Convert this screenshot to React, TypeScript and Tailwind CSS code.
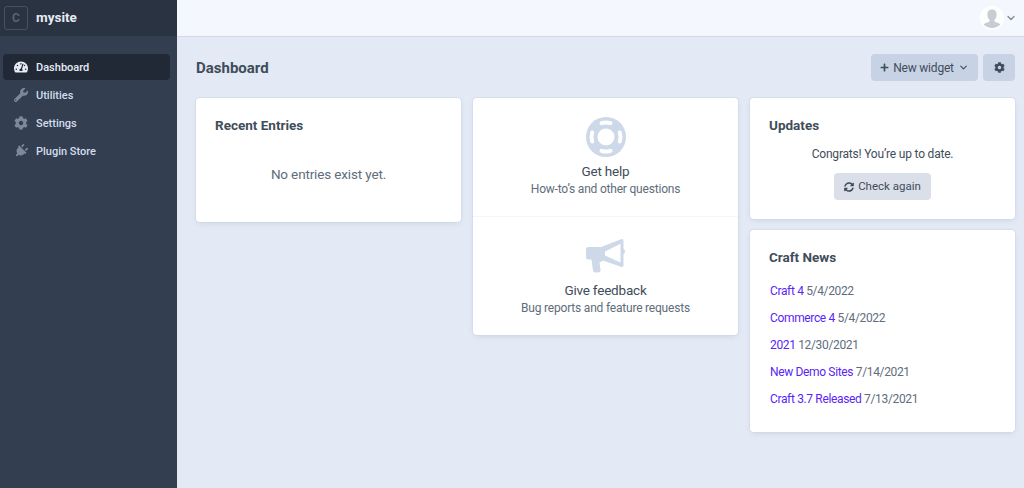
import React from 'react';
import { FaTachometerAlt, FaWrench, FaCog, FaPlug, FaPlus, FaSyncAlt } from 'react-icons/fa';
import { ChevronDown } from 'lucide-react';

const navItems = [
    { label: 'Dashboard', icon: FaTachometerAlt, active: true, iconClass: '' },
    { label: 'Utilities', icon: FaWrench, active: false, iconClass: '' },
    { label: 'Settings', icon: FaCog, active: false, iconClass: '' },
    { label: 'Plugin Store', icon: FaPlug, active: false, iconClass: 'rotate-45' },
];

const news = [
    { title: 'Craft 4', date: '5/4/2022' },
    { title: 'Commerce 4', date: '5/4/2022' },
    { title: '2021', date: '12/30/2021' },
    { title: 'New Demo Sites', date: '7/14/2021' },
    { title: 'Craft 3.7 Released', date: '7/13/2021' },
];

const cardClass = 'bg-white rounded-[4px] shadow-[0_0_0_1px_rgba(205,216,228,0.5),0_2px_6px_-2px_rgba(100,120,150,0.25)]';

// the package ring has its bands on the diagonals, this one is on the axes
const LifeRing = () => (
    <svg width="40" height="40" viewBox="0 0 40 40" className="text-[#cdd8e9]">
        <circle cx="20" cy="20" r="20" fill="currentColor" />
        <circle cx="20" cy="20" r="8.5" fill="#fff" />
        <g fill="none" stroke="#fff" strokeWidth="4" strokeLinecap="round">
            <path d="M15.5 6.2A14.5 14.5 0 0 1 24.5 6.2" />
            <path d="M33.8 15.5A14.5 14.5 0 0 1 33.8 24.5" />
            <path d="M24.5 33.8A14.5 14.5 0 0 1 15.5 33.8" />
            <path d="M6.2 24.5A14.5 14.5 0 0 1 6.2 15.5" />
        </g>
    </svg>
);

const Megaphone = () => (
    <svg width="42" height="36" viewBox="0 0 42 36" className="text-[#cdd8e9]">
        <path
            fill="currentColor"
            fillRule="evenodd"
            d="M3 9H16L36 1.2Q38.5 .4 38.5 3V10.5Q41.5 13.5 38.5 16.5V27Q38.5 29.6 36 28.8L18 22.5L14.5 24.5L15.5 32Q15.8 34.5 13 34.5H10.5Q8.5 34.5 8 32.5L6.5 21.5H3Q1 21.5 1 19V11.5Q1 9 3 9ZM20 13.5V17.5L35.5 24.5V5.8Z"
        />
    </svg>
);

const Avatar = () => (
    <svg width="24" height="24" viewBox="0 0 24 24">
        <circle cx="12" cy="12" r="12" fill="#fff" />
        <path
            fill="#c9ccd2"
            d="M12 3.5C8.6 3.5 7.2 6 7.4 9C7.6 11.5 8.6 13.2 9.6 14V15.6C7.5 16.6 5 17.2 3.6 18.6A12 12 0 0 0 20.4 18.6C19 17.2 16.5 16.6 14.4 15.6V14C15.4 13.2 16.4 11.5 16.6 9C16.8 6 15.4 3.5 12 3.5Z"
        />
    </svg>
);

const App: React.FC = () => {
    return (
        <div className="flex h-[488px] w-[1024px] overflow-hidden bg-[#e3e9f5] font-['Roboto',sans-serif] text-[12px] text-[#3f4d5a]">
            {/* Sidebar */}
            <aside className="w-[177px] shrink-0 bg-[#333f50] text-[#d2dcee]">
                <div className="flex h-[36px] items-center gap-[8px] bg-[#2a3341] pl-[4px]">
                    <div className="flex h-[24px] w-[24px] items-center justify-center rounded-[3px] border border-[#465162] text-[12px] font-semibold text-[#5b6677]">
                        C
                    </div>
                    <span className="-mt-[2px] text-[13.5px] font-bold text-[#e6ebf5]">mysite</span>
                </div>
                <nav className="mt-[18px] flex flex-col gap-[2px] pl-[3px] pr-[7px]">
                    {navItems.map((item) => {
                        const Icon = item.icon;
                        return (
                            <div
                                key={item.label}
                                className={`flex h-[26px] items-center gap-[8px] rounded-[4px] pl-[11px] text-[11px] font-medium ${item.active ? 'bg-[#212937] text-[#e6ebf5]' : ''}`}
                            >
                                <Icon size={14} className={`${item.iconClass} ${item.active ? 'text-[#e6ebf5]' : 'text-[#7d8899]'}`} />
                                <span className="mt-[2px]">{item.label}</span>
                            </div>
                        );
                    })}
                </nav>
            </aside>

            <div className="flex-1">
                {/* Top bar */}
                <header className="flex h-[37px] items-center justify-end border-b border-[#cfd8e8] bg-[#f4f7fd] pr-[7px]">
                    <Avatar />
                    <ChevronDown size={12} strokeWidth={2.5} className="ml-[1px] text-[#7d8899]" />
                </header>

                {/* Page title */}
                <div className="flex h-[61px] items-center justify-between pl-[19px] pr-[9px]">
                    <h1 className="mt-[2px] text-[15px] font-bold text-[#3f4d5a]">Dashboard</h1>
                    <div className="flex gap-[5px]">
                        <button className="flex h-[27px] w-[107px] items-center justify-center gap-[4px] rounded-[4px] bg-[#c8d2e5] text-[12px] tracking-[-0.2px] text-[#3f4d5a]">
                            <FaPlus size={9} />
                            <span>New widget</span>
                            <ChevronDown size={11} strokeWidth={2.5} />
                        </button>
                        <button className="flex h-[27px] w-[32px] items-center justify-center rounded-[4px] bg-[#c8d2e5] text-[#3f4d5a]">
                            <FaCog size={11} />
                        </button>
                    </div>
                </div>

                {/* Widgets */}
                <div className="flex items-start gap-[12px] pl-[19px] pr-[9px]">
                    <section className={`${cardClass} h-[124px] w-[265px] px-[19px] pt-[17px]`}>
                        <h2 className="text-[13.5px] font-bold">Recent Entries</h2>
                        <p className="mt-[29px] text-center text-[13.5px] tracking-[-0.15px] text-[#606d7b]">No entries exist yet.</p>
                    </section>

                    <section className={`${cardClass} h-[237px] w-[265px]`}>
                        <div className="flex h-[119px] flex-col items-center border-b border-[#f3f6fb] pt-[19px]">
                            <LifeRing />
                            <div className="mt-[4px] text-[13.5px] tracking-[-0.2px]">Get help</div>
                            <div className="-mt-[1px] text-[12px] tracking-[-0.2px] text-[#606d7b]">How-to’s and other questions</div>
                        </div>
                        <div className="flex flex-col items-center pt-[21px]">
                            <Megaphone />
                            <div className="mt-[6px] text-[13.5px] tracking-[-0.2px]">Give feedback</div>
                            <div className="-mt-[1px] text-[12px] tracking-[-0.2px] text-[#606d7b]">Bug reports and feature requests</div>
                        </div>
                    </section>

                    <div className="flex w-[265px] flex-col gap-[11px]">
                        <section className={`${cardClass} h-[121px] px-[19px] pt-[17px]`}>
                            <h2 className="text-[13.5px] font-bold">Updates</h2>
                            <p className="mt-[10px] text-center text-[12px] tracking-[-0.2px]">Congrats! You’re up to date.</p>
                            <div className="mt-[10px] flex justify-center">
                                <button className="flex h-[27px] w-[97px] items-center justify-center gap-[4px] rounded-[4px] bg-[#dadfea] text-[11.5px]">
                                    <FaSyncAlt size={10} />
                                    <span>Check again</span>
                                </button>
                            </div>
                        </section>
                        <section className={`${cardClass} h-[202px] px-[19px] pt-[17px]`}>
                            <h2 className="text-[13.5px] font-bold">Craft News</h2>
                            <ul className="mt-[16px] flex flex-col gap-[10px] pl-[1px] text-[12px] leading-[17px] tracking-[-0.35px] text-[#606d7b]">
                                {news.map((n) => (
                                    <li key={n.title}>
                                        <a className="text-[#5b25f5]">{n.title}</a> {n.date}
                                    </li>
                                ))}
                            </ul>
                        </section>
                    </div>
                </div>
            </div>
        </div>
    );
};

export default App;
